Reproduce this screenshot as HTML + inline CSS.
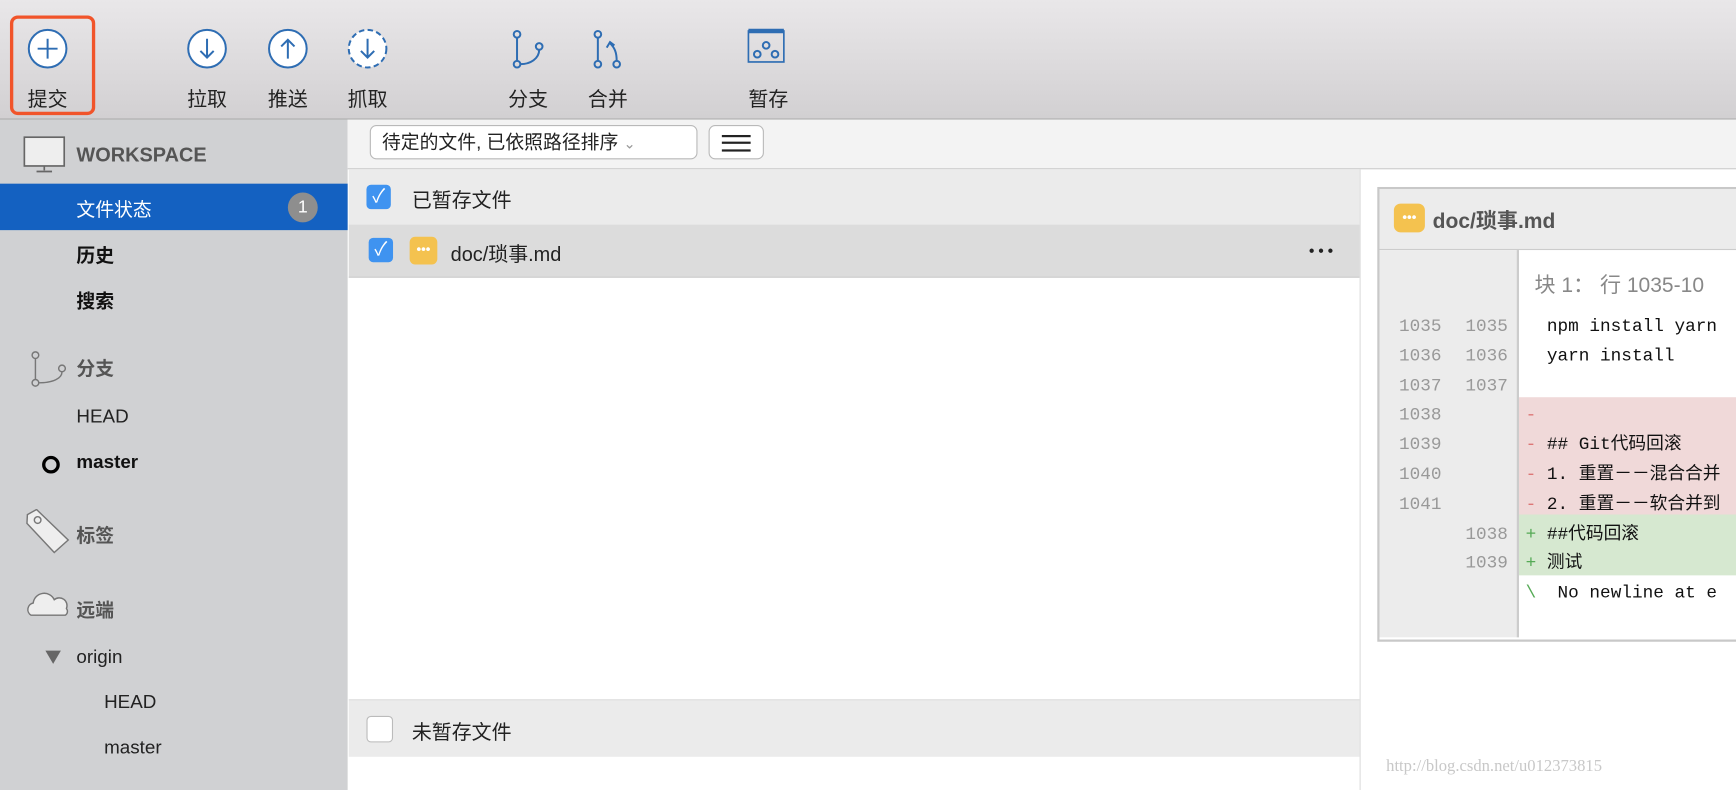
<!DOCTYPE html>
<html><head><meta charset="utf-8"><style>
html,body{margin:0;padding:0;overflow:hidden;width:1736px;height:790px;background:#fff}
#w{position:absolute;left:0;top:0;width:1568px;height:714px;transform:scale(1.10714,1.10644);transform-origin:0 0;font-family:"Liberation Sans","Noto Sans CJK SC",sans-serif;color:#222}
.a{position:absolute}
.tb{left:0;top:0;width:1568px;height:107px;background:linear-gradient(#e9e7e9,#d2d0d2);border-bottom:1px solid #aaa}
.lbl{font-size:18px;color:#222;top:76px;width:60px;text-align:center}
.side{left:0;top:108px;width:314px;height:606px;background:#d0d1d3}
.si{font-size:17px;font-weight:bold;color:#111}
.sh{font-size:17px;font-weight:bold;color:#555}
.cb{width:22px;height:22px;border-radius:4px;background:#3f93f0;color:#fff;font-size:17px;text-align:center;line-height:22px}
.mono{font-family:"Liberation Mono","Noto Sans CJK SC",monospace;font-size:16px}
</style></head><body><div id="w">
<div class="a tb"></div>
<div class="a" style="left:9px;top:14px;width:71px;height:84px;border:3px solid #f1542a;border-radius:7px"></div>
<svg class="a" style="left:0;top:0" width="760" height="80" fill="none" stroke="#2e6db3" stroke-width="1.8">
<circle cx="43" cy="44" r="17" fill="#fff"/><path d="M43 35v18M34 44h18"/>
<circle cx="187" cy="44" r="17" fill="#fff"/><path d="M187 35v17M181 46l6 6 6-6"/>
<circle cx="260" cy="44" r="17" fill="#fff"/><path d="M260 53V36M254 42l6-6 6 6"/>
<circle cx="332" cy="44" r="17" fill="#fff" stroke-dasharray="5 3"/><path d="M332 35v17M326 46l6 6 6-6"/>
<circle cx="467" cy="31" r="3"/><circle cx="467" cy="58" r="3"/><circle cx="487" cy="42" r="3"/><path d="M467 34v21M487 45c0 8-8 13-17 13"/>
<circle cx="540" cy="31" r="3"/><circle cx="540" cy="58" r="3"/><circle cx="557" cy="58" r="3"/><path d="M540 34v21M557 55c0-8-2-12-6-16M548 43l3-5 4 3"/>
<rect x="676" y="28" width="32" height="28" stroke-width="1.5"/><path d="M676 28h32" stroke-width="4"/><circle cx="684" cy="49" r="3"/><circle cx="692" cy="41" r="3"/><circle cx="700" cy="49" r="3"/>
</svg>
<div class="a lbl" style="left:13px">提交</div>
<div class="a lbl" style="left:157px">拉取</div>
<div class="a lbl" style="left:230px">推送</div>
<div class="a lbl" style="left:302px">抓取</div>
<div class="a lbl" style="left:447px">分支</div>
<div class="a lbl" style="left:519px">合并</div>
<div class="a lbl" style="left:664px">暂存</div>

<div class="a side"></div>
<svg class="a" style="left:20px;top:122px" width="40" height="36" fill="none" stroke="#666" stroke-width="1.5"><rect x="2" y="2" width="36" height="26" fill="#eee"/><path d="M20 28v4M13 33h14"/></svg>
<div class="a sh" style="left:69px;top:130px;font-size:18px">WORKSPACE</div>
<div class="a" style="left:0;top:166px;width:314px;height:42px;background:#1461c1"></div>
<div class="a" style="left:69px;top:175px;font-size:17px;color:#fff">文件状态</div>
<div class="a" style="left:260px;top:174px;width:27px;height:27px;border-radius:14px;background:#8e8e8e;color:#fff;font-size:16px;text-align:center;line-height:27px">1</div>
<div class="a si" style="left:69px;top:217px">历史</div>
<div class="a si" style="left:69px;top:258px">搜索</div>
<svg class="a" style="left:22px;top:310px" width="40" height="40" fill="none" stroke="#777" stroke-width="1.3">
<circle cx="10" cy="11" r="3"/><circle cx="10" cy="36" r="3"/><circle cx="34" cy="23" r="3"/><path d="M10 14v19M34 26c0 6-8 10-21 10"/></svg>
<svg class="a" style="left:22px;top:460px" width="44" height="44" fill="none" stroke="#777" stroke-width="1.3">
<path d="M2 6l8-5 30 26-12 12L2 14z" fill="#eee" transform="rotate(3 20 20)"/><circle cx="12" cy="10" r="3"/></svg>
<svg class="a" style="left:24px;top:530px" width="40" height="30" fill="none" stroke="#777" stroke-width="1.3">
<path d="M4 26a6 6 0 0 1 2-11 10 10 0 0 1 19-3 7 7 0 0 1 11 8 4 4 0 0 1-1 6z" fill="#eee"/></svg>
<div class="a sh" style="left:69px;top:319px">分支</div>
<div class="a" style="left:69px;top:367px;font-size:17px">HEAD</div>
<div class="a" style="left:38px;top:412px;width:10px;height:10px;border:3px solid #000;border-radius:50%"></div>
<div class="a si" style="left:69px;top:408px">master</div>
<div class="a sh" style="left:69px;top:470px">标签</div>
<div class="a sh" style="left:69px;top:537px">远端</div>
<div class="a" style="left:41px;top:588px;width:0;height:0;border-left:7px solid transparent;border-right:7px solid transparent;border-top:12px solid #666"></div>
<div class="a" style="left:69px;top:584px;font-size:17px">origin</div>
<div class="a" style="left:94px;top:625px;font-size:17px">HEAD</div>
<div class="a" style="left:94px;top:666px;font-size:17px">master</div>

<div class="a" style="left:314px;top:108px;width:1254px;height:44px;background:#f3f3f3;border-bottom:1px solid #ccc"></div>
<div class="a" style="left:334px;top:113px;width:294px;height:29px;border:1px solid #b9b9b9;border-radius:6px;background:#fff;font-size:17px;line-height:29px;text-indent:10px">待定的文件, 已依照路径排序 <span style="color:#999;font-size:13px">&#8964;</span></div>
<div class="a" style="left:640px;top:113px;width:48px;height:29px;border:1px solid #b9b9b9;border-radius:6px;background:#fff"><div style="margin:8px 11px;height:11px;border-top:2px solid #222;border-bottom:2px solid #222;width:26px;position:relative"><div style="position:absolute;top:4px;left:0;width:26px;border-top:2px solid #222"></div></div></div>

<div class="a" style="left:315px;top:153px;width:913px;height:50px;background:#ebebeb"></div>
<div class="a cb" style="left:331px;top:167px">✓</div>
<div class="a" style="left:372px;top:167px;font-size:18px">已暂存文件</div>
<div class="a" style="left:315px;top:203px;width:913px;height:47px;background:#dcdcdc;border-bottom:1px solid #ccc"></div>
<div class="a cb" style="left:333px;top:215px">✓</div>
<div class="a" style="left:370px;top:214px;width:25px;height:25px;border-radius:5px;background:#f4c24f;color:#fff;font-size:12px;text-align:center;line-height:22px;font-weight:bold">•••</div>
<div class="a" style="left:407px;top:216px;font-size:18px">doc/琐事.md</div>
<div class="a" style="left:1182px;top:221px;font-size:9px;letter-spacing:3px">●●●</div>
<div class="a" style="left:315px;top:632px;width:913px;height:51px;background:#ebebeb;border-top:1px solid #ddd"></div>
<div class="a" style="left:331px;top:647px;width:22px;height:22px;border:1px solid #bbb;border-radius:4px;background:#fff"></div>
<div class="a" style="left:372px;top:648px;font-size:18px">未暂存文件</div>
<div class="a" style="left:1228px;top:153px;width:1px;height:561px;background:#ddd"></div>

<div class="a" style="left:1244px;top:169px;width:330px;height:407px;border:2px solid #c8c8c8;background:#fff"></div>
<div class="a" style="left:1246px;top:171px;width:330px;height:54px;background:#ececec;border-bottom:1px solid #ccc"></div>
<div class="a" style="left:1259px;top:184px;width:28px;height:26px;border-radius:6px;background:#f4c24f;color:#fff;font-size:12px;text-align:center;line-height:24px;font-weight:bold">•••</div>
<div class="a" style="left:1294px;top:185px;font-size:19px;font-weight:bold;color:#555">doc/琐事.md</div>
<div class="a" style="left:1246px;top:226px;width:124px;height:350px;background:#ececec;border-right:2px solid #ccc"></div>
<div class="a" style="left:1386px;top:243px;font-size:19px;color:#888;white-space:nowrap">块 1： 行 1035-10</div>
<div class="a" style="left:1372px;top:359px;width:200px;height:106px;background:#f0d9d9"></div>
<div class="a" style="left:1372px;top:465px;width:200px;height:55px;background:#d6e8d0"></div>
<div class="a mono" style="left:1250px;top:282px;line-height:26.8px;color:#999;width:52px;text-align:right">1035<br>1036<br>1037<br>1038<br>1039<br>1040<br>1041</div>
<div class="a mono" style="left:1310px;top:282px;line-height:26.8px;color:#999;width:52px;text-align:right">1035<br>1036<br>1037<br><br><br><br><br>1038<br>1039</div>
<div class="a mono" style="left:1378px;top:282px;line-height:26.8px;white-space:nowrap;color:#111">
<div>&nbsp; npm install yarn</div><div>&nbsp; yarn install</div><div>&nbsp;</div>
<div><span style="color:#d77">-</span></div>
<div><span style="color:#d77">-</span> ## Git代码回滚</div>
<div><span style="color:#d77">-</span> 1. 重置－－混合合并</div>
<div><span style="color:#d77">-</span> 2. 重置－－软合并到</div>
<div><span style="color:#5a5">+</span> ##代码回滚</div>
<div><span style="color:#5a5">+</span> 测试</div>
<div><span style="color:#5a5">\</span>&nbsp; No newline at e</div>
</div>
<div class="a" style="left:1252px;top:685px;font-family:'Liberation Serif',serif;font-size:15px;color:#c8c8c8">http://blog.csdn.net/u012373815</div>
</div></body></html>
